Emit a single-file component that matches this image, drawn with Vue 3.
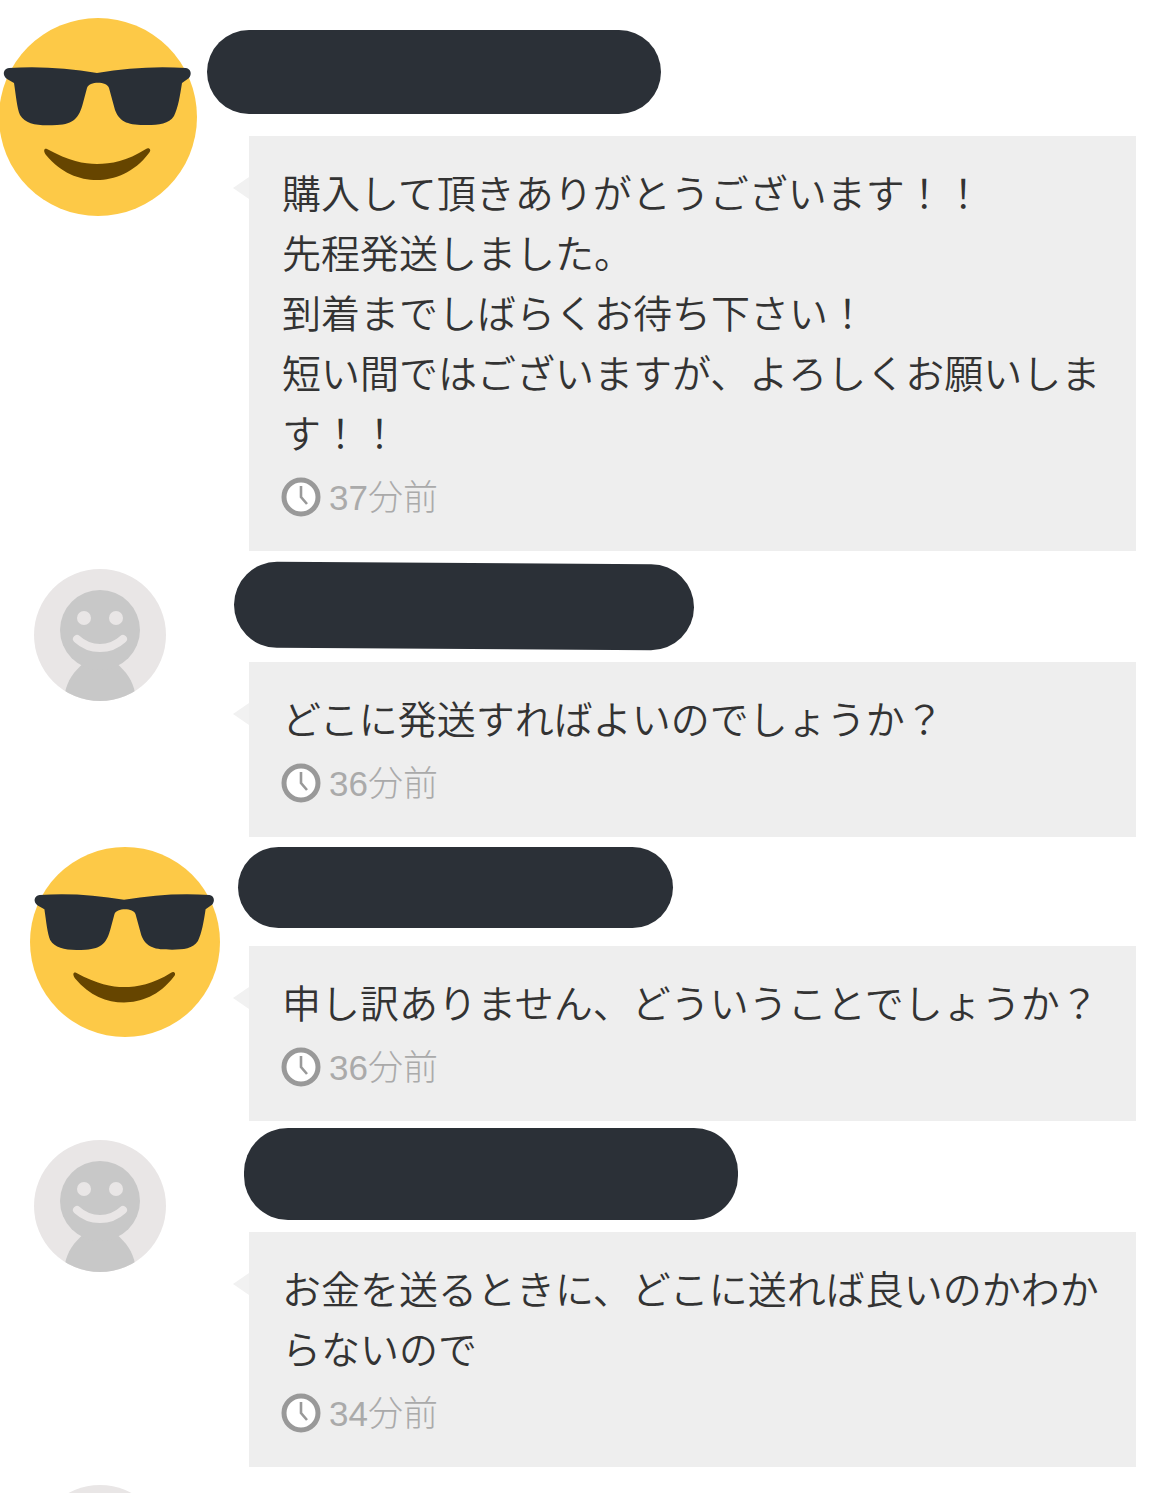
<script setup>
const messages = [
  {
    id: 1,
    seller: true,
    text: "購入して頂きありがとうございます！！\n先程発送しました。\n到着までしばらくお待ち下さい！\n短い間ではございますが、よろしくお願いします！！",
    time: "37分前"
  },
  { id: 2, seller: false, text: "どこに発送すればよいのでしょうか？", time: "36分前" },
  { id: 3, seller: true, text: "申し訳ありません、どういうことでしょうか？", time: "36分前" },
  { id: 4, seller: false, text: "お金を送るときに、どこに送れば良いのかわからないので", time: "34分前" }
];
</script>

<template>
  <div class="thread">
    <section
      v-for="msg in messages"
      :key="msg.id"
      class="msg"
      :class="'msg' + msg.id"
    >
      <div class="side">
        <!-- sunglasses emoji for the seller -->
        <svg v-if="msg.seller" class="avatar" viewBox="0 0 198 198">
          <circle cx="99" cy="99" r="99" fill="#fdc947" />
          <path
            d="M48 131C70 143 85 146 98 146C112 146 128 143 147 131C150 129 153 132 150 135C135 155 115 162 98 162C80 162 62 155 47 137C44 133 45 130 48 131Z"
            fill="#664500"
          />
          <path
            d="M10 50C40 48 68 50 98 55C128 50 156 48 187 50C192 51 193 56 190 60L183 65C181 78 179 90 175 98C170 106 160 107 148 107C130 107 121 105 116 92L110 70C108 63 90 63 88 70L84 85C80 100 75 106 58 107C40 108 27 107 21 97C18 90 17 78 15 65L8 61C3 57 4 51 10 50Z"
            fill="#292f36"
          />
        </svg>
        <svg v-else class="avatar" viewBox="0 0 132 132">
          <use href="#blank-face" />
        </svg>
      </div>
      <div class="main">
        <div class="name-bar"></div>
        <div class="bubble">
          <p class="text">{{ msg.text }}</p>
          <div class="time">
            <svg class="clock" viewBox="0 0 40 40">
              <circle cx="20" cy="20" r="17" fill="#fff" stroke="#999" stroke-width="5" />
              <path d="M20 9V20L26 27" fill="none" stroke="#999" stroke-width="2.6" />
            </svg>
            <span class="ago">{{ msg.time }}</span>
          </div>
        </div>
      </div>
    </section>

    <div class="last-row">
      <svg class="avatar" viewBox="0 0 132 132">
        <use href="#blank-face" />
      </svg>
    </div>

    <svg class="defs" width="0" height="0">
      <defs>
        <clipPath id="face-clip">
          <circle cx="66" cy="66" r="66" />
        </clipPath>
        <g id="blank-face" clip-path="url(#face-clip)">
          <rect width="132" height="132" fill="#e9e6e6" />
          <path d="M31 124C33 112 40 102 50 94H82C92 102 99 112 101 124V132H31Z" fill="#c8c8c8" />
          <circle cx="66" cy="61" r="40" fill="#c8c8c8" />
          <circle cx="50" cy="49" r="7" fill="#e9e6e6" />
          <circle cx="82" cy="49" r="7" fill="#e9e6e6" />
          <path d="M43 70C56 82 76 82 89 70" fill="none" stroke="#e9e6e6" stroke-width="8" stroke-linecap="round" />
        </g>
      </defs>
    </svg>
  </div>
</template>

<style>
body {
  background: #fff;
}
</style>

<style scoped>
.thread {
  height: 1493px;
  overflow: hidden;
  font-family: "Noto Sans CJK JP", "Liberation Sans", sans-serif;
}

.msg {
  display: flex;
}

.side {
  flex: 0 0 249px;
  width: 249px;
}

.main {
  width: 887px;
}

.avatar {
  display: block;
  width: 132px;
  height: 132px;
  margin: 18px 0 0 34px;
}

.name-bar {
  background: #2b3037;
  border-radius: 44px;
}

/* each row's avatar and blacked-out name sit a little differently */
.msg1 .avatar {
  width: 198px;
  height: 198px;
  margin: 18px 0 0 -1px;
}
.msg1 .main {
  padding-top: 30px;
}
.msg1 .name-bar {
  width: 454px;
  height: 84px;
  margin: 0 0 22px -42px;
}

.msg2 .main {
  padding-top: 12px;
}
.msg2 .name-bar {
  width: 460px;
  height: 86px;
  margin: 0 0 13px -15px;
  transform: rotate(0.35deg);
}

.msg3 .avatar {
  width: 190px;
  height: 190px;
  margin: 10px 0 0 30px;
}
.msg3 .main {
  padding-top: 10px;
}
.msg3 .name-bar {
  width: 435px;
  height: 81px;
  margin: 0 0 18px -11px;
}

.msg4 .avatar {
  margin-top: 19px;
}
.msg4 .main {
  padding-top: 7px;
}
.msg4 .name-bar {
  width: 494px;
  height: 92px;
  margin: 0 0 12px -5px;
}

.bubble {
  position: relative;
  background: #eee;
  padding: 25px 20px 34px 33px;
}

/* little tail pointing at the avatar */
.bubble::before {
  content: "";
  position: absolute;
  left: -16px;
  top: 41px;
  border-style: solid;
  border-width: 11px 16px 11px 0;
  border-color: transparent #f1f1f1 transparent transparent;
}

.text {
  margin: 0;
  font-size: 39px;
  font-weight: 350;
  line-height: 60px;
  color: #333;
  white-space: pre-line;
}

.time {
  display: flex;
  align-items: center;
  gap: 8px;
  height: 40px;
  margin-top: 16px;
  font-family: "Liberation Sans", "Noto Sans CJK JP", sans-serif;
  font-size: 35px;
  font-weight: 300;
  color: #aaa;
}

.ago {
  padding-bottom: 5px;
}

.clock {
  width: 40px;
  height: 40px;
  flex: none;
  margin-left: -1px;
}

.defs {
  position: absolute;
}
</style>
